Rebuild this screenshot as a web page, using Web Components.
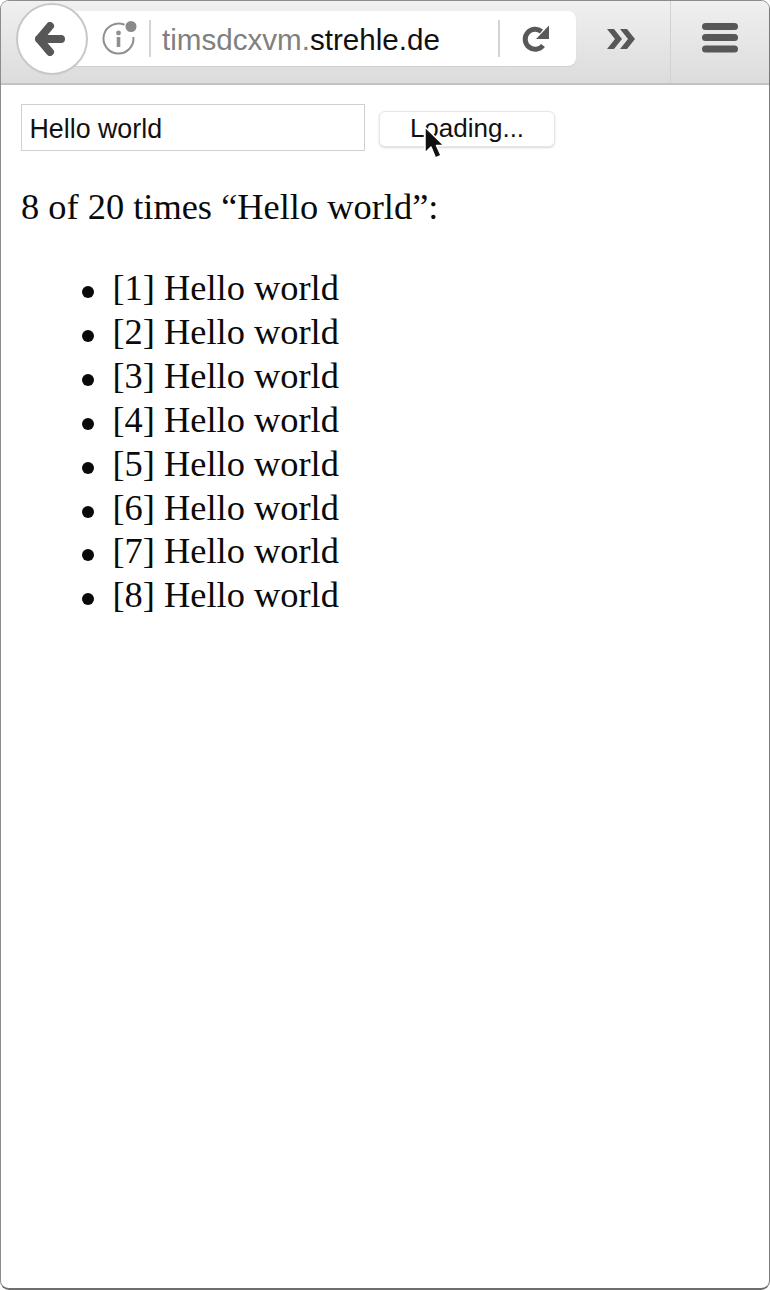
<!DOCTYPE html>
<html>
<head>
<meta charset="utf-8">
<title>Hello world</title>
<style>
  html, body { margin: 0; padding: 0; background: #fff; }
</style>
</head>
<body>
<browser-window>
  <browser-toolbar slot="toolbar" host-prefix="timsdcxvm." host-name="strehle.de"></browser-toolbar>
  <search-form value="Hello world" label="Loading..."></search-form>
  <result-list query="Hello world" shown="8" total="20"></result-list>
</browser-window>

<script>
class BrowserWindow extends HTMLElement {
  constructor() {
    super();
    this.attachShadow({ mode: "open" });
  }

  connectedCallback() {
    this.shadowRoot.innerHTML = /* html */`
    <style>
      :host {
        display: block;
        width: 770px;
        height: 1290px;
        box-sizing: border-box;
        background: #fff;
      }
      .frame {
        height: 100%;
        box-sizing: border-box;
        display: flex;
        flex-direction: column;
        border: 1.5px solid #8c8c8c;
        border-right-color: #7a7a7a;
        border-bottom: 2px solid #6e6e6e;
        border-radius: 9px;
        overflow: hidden;
      }
      .content {
        flex: 1;
        padding: 19px 0 0 20px;
      }
    </style>
    <div class="frame">
      <slot name="toolbar"></slot>
      <div class="content"><slot></slot></div>
    </div>`;
  }
}

class BrowserToolbar extends HTMLElement {
  constructor() {
    super();
    this.attachShadow({ mode: "open" });
  }

  connectedCallback() {
    const prefix = this.getAttribute("host-prefix");
    const name = this.getAttribute("host-name");
    this.shadowRoot.innerHTML = /* html */`
    <style>
      :host {
        display: block;
        flex: none;
      }
      .bar {
        height: 84px;
        box-sizing: border-box;
        display: flex;
        align-items: flex-start;
        background: linear-gradient(to bottom, #f0f0f0, #dcdcdc);
        border-bottom: 2px solid #c2c2c2;
      }
      .back {
        flex: none;
        position: relative;
        z-index: 2;
        width: 72px;
        height: 72px;
        margin: 2px 0 0 15px;
        box-sizing: border-box;
        display: flex;
        align-items: center;
        justify-content: center;
        background: #fff;
        border: 2px solid #c8c8c8;
        border-radius: 50%;
      }
      .url {
        flex: none;
        width: 505px;
        height: 55px;
        margin: 10px 0 0 -17px;
        padding-left: 30px;
        box-sizing: border-box;
        display: flex;
        align-items: center;
        background: #fff;
        border-radius: 0 8px 8px 0;
        box-shadow: 0 1px 1px #cfcfcf;
        font: 29.6px "Liberation Sans", Arial, sans-serif;
        color: #111;
      }
      .info { flex: none; width: 36px; height: 36px; margin-top: -2px; overflow: visible; }
      .sep {
        flex: none;
        width: 2px;
        height: 37px;
        background: #d4d4d4;
      }
      .sep.first { margin: 0 11px 0 12px; }
      .host { flex: 1; white-space: nowrap; padding-top: 3px; }
      .host span { color: #808080; }
      .reload {
        flex: none;
        width: 74px;
        padding-right: 2px;
        display: flex;
        justify-content: center;
      }
      .more {
        flex: none;
        width: 94px;
        height: 75px;
        padding-right: 4px;
        box-sizing: border-box;
        display: flex;
        align-items: center;
        justify-content: center;
      }
      .menu {
        flex: 1;
        height: 82px;
        display: flex;
        align-items: center;
        justify-content: center;
        box-sizing: border-box;
        border-left: 1.5px solid #d2d2d2;
        padding: 0 0 9px 0;
      }
      svg { display: block; }
    </style>
    <div class="bar">
      <div class="back">
        <svg width="34" height="34" viewBox="1 0 34 34">
          <path d="M16 4 L5 17 L16 30 M5 17 H27" fill="none" stroke="#575757" stroke-width="8" stroke-linecap="round" stroke-linejoin="round"/>
        </svg>
      </div>
      <div class="url">
        <svg class="info" viewBox="0 0 36 36">
          <path d="M23.5 4.75 A15 15 0 1 0 32.4 17" fill="none" stroke="#8f8f8f" stroke-width="2"/>
          <circle cx="17.5" cy="13" r="2.4" fill="#8f8f8f"/>
          <path d="M17.5 17 V27" fill="none" stroke="#8f8f8f" stroke-width="3.6"/>
          <circle cx="30" cy="6.5" r="5.5" fill="#8a8a8a"/>
        </svg>
        <div class="sep first"></div>
        <div class="host"><span>${prefix}</span>${name}</div>
        <div class="sep"></div>
        <div class="reload">
          <svg width="30" height="30" viewBox="0 0 30 30">
            <path d="M21 21.5 A10 10 0 1 1 19.5 7.5" fill="none" stroke="#585858" stroke-width="5"/>
            <path d="M27 1.5 V15 H14 Z" fill="#585858"/>
          </svg>
        </div>
      </div>
      <div class="more">
        <svg width="30" height="24" viewBox="0 0 30 24">
          <path d="M1 2 H8 L16 12 L8 22 H1 L9 12 Z M14 2 H21 L29 12 L21 22 H14 L22 12 Z" fill="#575757"/>
        </svg>
      </div>
      <div class="menu">
        <svg width="38" height="31" viewBox="0 0 38 31">
          <rect x="1" y="1" width="36" height="7" rx="3.5" fill="#575757"/>
          <rect x="1" y="12" width="36" height="7" rx="3.5" fill="#575757"/>
          <rect x="1" y="23.5" width="36" height="7" rx="3.5" fill="#575757"/>
        </svg>
      </div>
    </div>`;
  }
}

class SearchForm extends HTMLElement {
  constructor() {
    super();
    this.attachShadow({ mode: "open" });
  }

  connectedCallback() {
    this.shadowRoot.innerHTML = /* html */`
    <style>
      :host {
        display: flex;
        align-items: flex-start;
        gap: 14px;
        font: 26px "Liberation Sans", Arial, sans-serif;
        color: #111;
      }
      .input {
        width: 344px;
        height: 47px;
        box-sizing: border-box;
        display: flex;
        align-items: center;
        padding: 4px 7.5px 0;
        background: #fff;
        border: 1.5px solid #d0d0d0;
        font-size: 26.8px;
      }
      .button {
        position: relative;
        width: 176px;
        height: 36px;
        margin-top: 7px;
        padding-bottom: 2px;
        box-sizing: border-box;
        display: flex;
        align-items: center;
        justify-content: center;
        background: #fff;
        border: 1px solid #e6e6e6;
        border-radius: 6px;
        box-shadow: 0 1px 2px #d8d8d8;
      }
      .cursor {
        position: absolute;
        left: 42.5px;
        top: 14px;
      }
    </style>
    <div class="input">${this.getAttribute("value")}</div>
    <div class="button">
      ${this.getAttribute("label")}
      <svg class="cursor" width="24" height="38" viewBox="0 0 24 38">
        <path d="M2 1 V27 L8 21 L12.5 32 L18 29.5 L13.5 19.5 H21 Z" fill="#111" stroke="#fff" stroke-width="1.5" stroke-linejoin="round"/>
      </svg>
    </div>`;
  }
}

class ResultList extends HTMLElement {
  constructor() {
    super();
    this.attachShadow({ mode: "open" });
  }

  connectedCallback() {
    const query = this.getAttribute("query");
    const shown = Number(this.getAttribute("shown"));
    const total = this.getAttribute("total");
    let items = "";
    for (let i = 1; i <= shown; i++) {
      items += `<li>[${i}] ${query}</li>`;
    }
    this.shadowRoot.innerHTML = /* html */`
    <style>
      :host {
        display: block;
        font: 36.4px/43.85px "Liberation Serif", "Times New Roman", serif;
        color: #0a0a0a;
      }
      p { margin: 35px 0 0; }
      ul { margin: 37.5px 0 0; padding: 0 0 0 91.5px; list-style: none; }
      li { display: flex; white-space: pre; }
      li::before {
        content: "";
        flex: none;
        width: 12px;
        height: 12px;
        margin: 19px 19px 0 -31px;
        border-radius: 50%;
        background: #0a0a0a;
      }
    </style>
    <p>${shown} of ${total} times “${query}”:</p>
    <ul>${items}</ul>`;
  }
}

customElements.define("browser-window", BrowserWindow);
customElements.define("browser-toolbar", BrowserToolbar);
customElements.define("search-form", SearchForm);
customElements.define("result-list", ResultList);
</script>
</body>
</html>
